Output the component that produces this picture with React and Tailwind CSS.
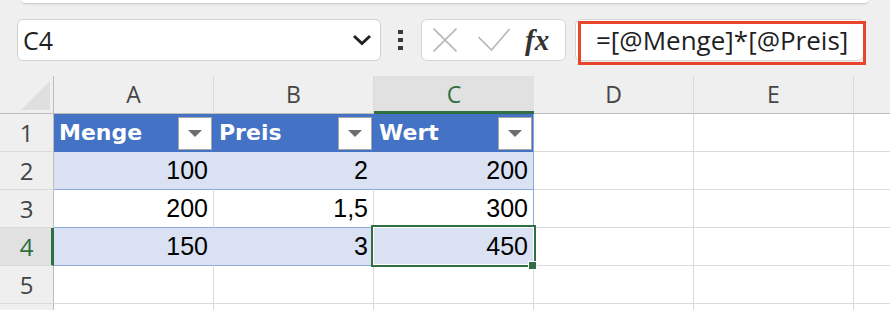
import React from 'react';

const cols = ['A', 'B', 'C', 'D', 'E', ''];

const data = [
  [100, 2, 200],
  [200, '1,5', 300],
  [150, 3, 450],
];

function FilterButton() {
  return (
    <div className="w-[34px] h-[33px] mr-[1px] bg-white border border-[#a6a6a6] flex items-center justify-center">
      <svg width="14" height="7" viewBox="0 0 14 7">
        <path d="M0 0 L14 0 L7 7 Z" fill="#6e6e6e" />
      </svg>
    </div>
  );
}

function RowHeader({ n, active }) {
  return (
    <div
      className={`flex items-center justify-center text-[24px] border-b border-b-[#dadada] ${
        active
          ? 'bg-[#e1e1e1] text-[#2f6f42] border-r-[3px] border-r-[#2f6f42] pl-[2px]'
          : 'bg-[#efefef] text-[#444] border-r border-r-[#bdbdbd]'
      }`}
      style={{ fontFamily: '"Open Sans", sans-serif' }}
    >
      {n}
    </div>
  );
}

function EmptyCell() {
  return <div className="bg-white border-r border-b border-[#dadada]" />;
}

export default function App() {
  return (
    <div
      className="relative w-[890px] h-[310px] overflow-hidden bg-[#efefef]"
      style={{ fontFamily: '"Liberation Sans", Arial, sans-serif' }}
    >
      {/* top panel edge */}
      <div className="mx-[22px] h-[3px] bg-white rounded-b-lg shadow-[0_1px_2px_rgba(0,0,0,0.18)]" />

      {/* Formula bar */}
      <div className="flex items-center mt-[16px] h-[42px]" style={{ fontFamily: '"Open Sans", sans-serif' }}>
        <div className="ml-[17px] w-[364px] h-full bg-white border border-[#d1d1d1] rounded-[6px] flex items-center justify-between pl-[5px] pr-[8px]">
          <span className="text-[25px] text-[#1f1f1f] leading-none">C4</span>
          <svg width="20" height="12" viewBox="0 0 20 12">
            <path d="M2 2 L10 9.5 L18 2" fill="none" stroke="#222" strokeWidth="3" />
          </svg>
        </div>

        <div className="ml-[17px] flex flex-col gap-[4px]">
          <div className="w-[5px] h-[4px] bg-[#3a3a3a]" />
          <div className="w-[5px] h-[4px] bg-[#3a3a3a]" />
          <div className="w-[5px] h-[4px] bg-[#3a3a3a]" />
        </div>

        <div className="ml-[18px] w-[145px] h-full bg-white border border-[#d5d5d5] rounded-[6px] flex items-center pl-[11px]">
          <svg width="24" height="24" viewBox="0 0 24 24">
            <path d="M0.5 0.5 L23.5 23.5 M23.5 0.5 L0.5 23.5" stroke="#b8b8b8" strokeWidth="1.6" />
          </svg>
          <svg className="ml-[21px]" width="32" height="24" viewBox="0 0 32 24">
            <path d="M0.5 9 L13.5 22 L31.5 1" fill="none" stroke="#b8b8b8" strokeWidth="1.6" />
          </svg>
          <span
            className="ml-[15px] text-[29px] italic font-bold text-[#333] leading-none"
            style={{ fontFamily: '"Liberation Serif", serif' }}
          >
            fx
          </span>
        </div>

        <div className="relative ml-[9px] w-[289px] h-full bg-white border border-[#d5d5d5] rounded-[6px] flex items-center pl-[20px]">
          <span className="text-[26px] text-[#1f1f1f] leading-none">=[@Menge]*[@Preis]</span>
          <div className="absolute left-[2px] top-[1px] w-[288px] h-[44px] border-[3px] border-[#e8452c]" />
        </div>
      </div>

      {/* Grid */}
      <div className="mt-[15px] grid grid-cols-[54px_repeat(6,160px)] grid-rows-[38px_repeat(6,38px)]">
        {/* corner */}
        <div className="bg-[#efefef] border-r border-b border-[#bdbdbd]">
          <svg width="53" height="37" viewBox="0 0 53 37">
            <path d="M21 34 L50 5 L50 34 Z" fill="#dfdfdf" />
          </svg>
        </div>
        {cols.map((c, i) => (
          <div
            key={i}
            className={`flex items-center justify-center text-[23px] ${
              c === 'C'
                ? 'bg-[#e1e1e1] text-[#2f6f42] border-b-[3px] border-b-[#2f6f42] pt-[2px]'
                : 'bg-[#efefef] text-[#454545] border-r border-r-[#dadada] border-b border-b-[#bdbdbd]'
            }`}
            style={{ fontFamily: '"Open Sans", sans-serif' }}
          >
            {c}
          </div>
        ))}

        {/* row 1: table header */}
        <RowHeader n={1} />
        {['Menge', 'Preis', 'Wert'].map((h, i) => (
          <div
            key={h}
            className={`bg-[#4472c4] flex items-center justify-between pl-[5px] border-r ${
              i === 2 ? 'border-r-[#8ea9db]' : 'border-r-[#4472c4]'
            }`}
          >
            <span
              className="text-white font-bold text-[22px] leading-none"
              style={{ fontFamily: '"DejaVu Sans", sans-serif' }}
            >
              {h}
            </span>
            <FilterButton />
          </div>
        ))}
        <EmptyCell />
        <EmptyCell />
        <EmptyCell />

        {/* rows 2-4: table body */}
        {data.map((row, r) => {
          const banded = r !== 1;
          return (
            <React.Fragment key={r}>
              <RowHeader n={r + 2} active={r === 2} />
              {row.map((v, i) => (
                <div
                  key={i}
                  className={`flex items-center justify-end pr-[5px] text-[25px] text-black border-b border-b-[#8ea9db] border-r ${
                    banded ? 'bg-[#d9e1f2]' : 'bg-white'
                  } ${
                    i === 2
                      ? 'border-r-[#8ea9db]'
                      : banded
                      ? 'border-r-[#d9e1f2]'
                      : 'border-r-[#dadada]'
                  }`}
                >
                  {v}
                </div>
              ))}
              <EmptyCell />
              <EmptyCell />
              <EmptyCell />
            </React.Fragment>
          );
        })}

        {/* rows 5-6 */}
        {[5, ''].map((n, k) => (
          <React.Fragment key={k}>
            <RowHeader n={n} />
            {cols.map((c, i) => (
              <EmptyCell key={i} />
            ))}
          </React.Fragment>
        ))}
      </div>

      {/* active cell selection */}
      <div className="absolute left-[371px] top-[225px] w-[165px] h-[42px] border-[2.5px] border-[#2f6f42] shadow-[inset_0_0_0_1px_#ffffff]" />
      <div className="absolute left-[528px] top-[261px] w-[9px] h-[9px] bg-[#2f6f42] border border-white" />
    </div>
  );
}
